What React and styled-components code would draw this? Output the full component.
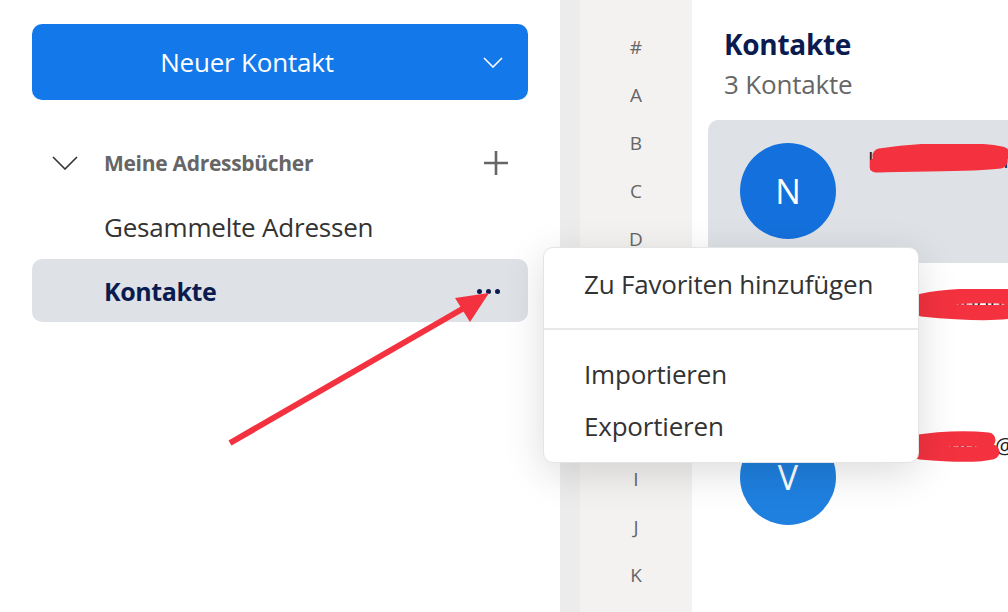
import React from 'react';
import styled, { createGlobalStyle } from 'styled-components';

const GlobalStyle = createGlobalStyle`
  body {
    margin: 0;
    font-family: 'Open Sans', 'Noto Sans', sans-serif;
    background: #fff;
  }
`;

const letters = ['#', 'A', 'B', 'C', 'D', 'E', 'F', 'G', 'H', 'I', 'J', 'K'];

const contacts = [
  {
    initial: 'N',
    color: '#1470dc',
    text: 'lmmmmmmmmmar',
    selected: true,
    scribble: { left: 162, top: 24, d: 'M10 12 C50 6 100 4 132 10 M6 21 C50 19 100 21 130 17' }
  },
  {
    initial: 'L',
    color: '#1a78de',
    text: 'nnnnnnnnnnl.mmm',
    selected: false,
    scribble: { left: 204, top: 26, d: 'M10 12 C40 6 80 6 100 8 M10 20 C40 23 80 25 100 22' }
  },
  {
    initial: 'V',
    color: '#1f80e0',
    text: 'nnnnnnnnnl@',
    selected: false,
    scribble: { left: 196, top: 24, d: 'M8 13 C40 8 64 8 84 10 M16 22 C50 25 76 25 88 22' }
  }
];

const ChevronDown = ({ width, height, color, stroke }) => (
  <svg width={width} height={height} viewBox={`0 0 ${width} ${height}`}>
    <polyline
      points={`1,1 ${width / 2},${height - 1} ${width - 1},1`}
      fill="none"
      stroke={color}
      strokeWidth={stroke}
    />
  </svg>
);

const App = () => {
  return (
    <Page>
      <GlobalStyle />
      <Sidebar>
        <NewButton>
          <NewLabel>Neuer Kontakt</NewLabel>
          <NewToggle>
            <ChevronDown width={20} height={11} color="#fff" stroke={1.6} />
          </NewToggle>
        </NewButton>

        <Tree>
          <TreeRow>
            <TreeChevron>
              <ChevronDown width={26} height={14} color="#333" stroke={1.6} />
            </TreeChevron>
            <GroupLabel>Meine Adressbücher</GroupLabel>
            <PlusIcon width="24" height="24" viewBox="0 0 24 24">
              <path d="M12 0 V24 M0 12 H24" stroke="#666" strokeWidth="2.6" />
            </PlusIcon>
          </TreeRow>
          <TreeRow>
            <TreeSpacer />
            <BookLabel>Gesammelte Adressen</BookLabel>
          </TreeRow>
          <TreeRow active>
            <TreeSpacer />
            <BookLabel active>Kontakte</BookLabel>
            <Dots>
              <Dot />
              <Dot />
              <Dot />
            </Dots>
          </TreeRow>
        </Tree>
      </Sidebar>

      <Gutter />

      <LetterColumn>
        {letters.map((l) => (
          <Letter key={l}>{l}</Letter>
        ))}
      </LetterColumn>

      <Main>
        <Header>
          <Title>Kontakte</Title>
          <Subtitle>3 Kontakte</Subtitle>
        </Header>
        <ContactList>
          {contacts.map((c) => (
            <ContactRow key={c.initial} selected={c.selected}>
              <Avatar color={c.color}>{c.initial}</Avatar>
              <ContactText>{c.text}</ContactText>
              <Scribble
                width="146"
                height="36"
                viewBox="0 0 146 36"
                style={{ left: c.scribble.left, top: c.scribble.top }}
              >
                <path
                  d={c.scribble.d}
                  fill="none"
                  stroke="#f4323f"
                  strokeWidth="15"
                  strokeLinecap="round"
                />
              </Scribble>
            </ContactRow>
          ))}
        </ContactList>
      </Main>

      <Menu>
        <MenuItem>Zu Favoriten hinzufügen</MenuItem>
        <MenuDivider />
        <MenuItem>Importieren</MenuItem>
        <MenuItem>Exportieren</MenuItem>
      </Menu>

      <ArrowLayer width="1008" height="612" viewBox="0 0 1008 612">
        <line x1="230" y1="443" x2="464" y2="308" stroke="#f4323f" strokeWidth="6" />
        <polygon points="489,293 455,298 470,322" fill="#f4323f" />
      </ArrowLayer>
    </Page>
  );
};

const Page = styled.div`
  position: relative;
  display: flex;
  width: 1008px;
  height: 612px;
  overflow: hidden;
`;

const Sidebar = styled.div`
  width: 560px;
  flex: 0 0 560px;
  box-sizing: border-box;
  padding: 24px 32px;
  background: #fff;
`;

const NewButton = styled.div`
  display: flex;
  height: 76px;
  border-radius: 10px;
  background: #1378ea;
  color: #fff;
`;

const NewLabel = styled.div`
  flex: 1;
  display: flex;
  align-items: center;
  justify-content: center;
  font-size: 26px;
  letter-spacing: -0.2px;
`;

const NewToggle = styled.div`
  width: 62px;
  display: flex;
  align-items: center;
  justify-content: center;
  padding-right: 4px;
`;

const Tree = styled.div`
  margin-top: 31px;
  display: flex;
  flex-direction: column;
`;

const TreeRow = styled.div`
  display: flex;
  align-items: center;
  height: ${(p) => (p.active ? '63px' : '64px')};
  border-radius: 10px;
  background: ${(p) => (p.active ? '#dee2e7' : 'transparent')};
  padding-right: 20px;
`;

const TreeChevron = styled.div`
  width: 52px;
  padding-left: 20px;
  display: flex;
  align-items: center;
`;

const TreeSpacer = styled.div`
  width: 72px;
`;

const GroupLabel = styled.div`
  flex: 1;
  font-size: 21px;
  font-weight: 700;
  color: #666;
  letter-spacing: -0.3px;
`;

const BookLabel = styled.div`
  flex: 1;
  font-size: ${(p) => (p.active ? '25px' : '26px')};
  font-weight: ${(p) => (p.active ? 700 : 400)};
  color: ${(p) => (p.active ? '#0b1b4f' : '#333')};
  letter-spacing: ${(p) => (p.active ? '-0.4px' : '-0.2px')};
`;

const PlusIcon = styled.svg`
  display: block;
`;

const Dots = styled.div`
  display: flex;
  gap: 4px;
  margin-right: 8px;
  margin-top: 2px;
`;

const Dot = styled.span`
  width: 5px;
  height: 5px;
  border-radius: 50%;
  background: #0b1b4f;
`;

const Gutter = styled.div`
  width: 20px;
  flex: 0 0 20px;
  background: #ececec;
`;

const LetterColumn = styled.div`
  width: 112px;
  flex: 0 0 112px;
  background: #f3f2f1;
  padding-top: 23px;
  display: flex;
  flex-direction: column;
`;

const Letter = styled.div`
  flex: 0 0 48px;
  height: 48px;
  display: flex;
  align-items: center;
  justify-content: center;
  font-size: 19px;
  color: #666;
`;

const Main = styled.div`
  flex: 1;
  padding-left: 16px;
  background: #fff;
`;

const Header = styled.div`
  padding: 24px 0 0 16px;
`;

const Title = styled.div`
  font-size: 28px;
  line-height: 40px;
  font-weight: 700;
  color: #0b1b4f;
  letter-spacing: -0.3px;
`;

const Subtitle = styled.div`
  font-size: 26px;
  line-height: 40px;
  color: #666;
  letter-spacing: -0.2px;
`;

const ContactList = styled.div`
  margin-top: 16px;
`;

const ContactRow = styled.div`
  position: relative;
  display: flex;
  align-items: flex-start;
  height: 143px;
  overflow: hidden;
  border-radius: 10px 0 0 10px;
  background: ${(p) => (p.selected ? '#dee2e7' : '#fff')};
`;

const Avatar = styled.div`
  flex: 0 0 96px;
  width: 96px;
  height: 96px;
  margin: 23px 0 0 32px;
  border-radius: 50%;
  background: ${(p) => p.color};
  color: #fff;
  display: flex;
  align-items: center;
  justify-content: center;
  font-size: 34px;
`;

const ContactText = styled.div`
  margin: 24px 0 0 32px;
  font-size: 22px;
  line-height: 30px;
  color: #222;
  white-space: nowrap;
`;

const Scribble = styled.svg`
  position: absolute;
`;

const Menu = styled.div`
  position: absolute;
  left: 543px;
  top: 247px;
  width: 376px;
  box-sizing: border-box;
  padding: 10px 0;
  background: #fff;
  border: 1px solid #e4e4e4;
  border-radius: 10px;
  box-shadow: 0 10px 40px rgba(0, 0, 0, 0.14);
`;

const MenuItem = styled.div`
  height: 52px;
  display: flex;
  align-items: center;
  padding-left: 40px;
  font-size: 26px;
  color: #333;
  letter-spacing: -0.2px;
`;

const MenuDivider = styled.div`
  height: 2px;
  margin: 18px 0;
  background: #e8e8e8;
`;

const ArrowLayer = styled.svg`
  position: absolute;
  left: 0;
  top: 0;
  pointer-events: none;
`;

export default App;
